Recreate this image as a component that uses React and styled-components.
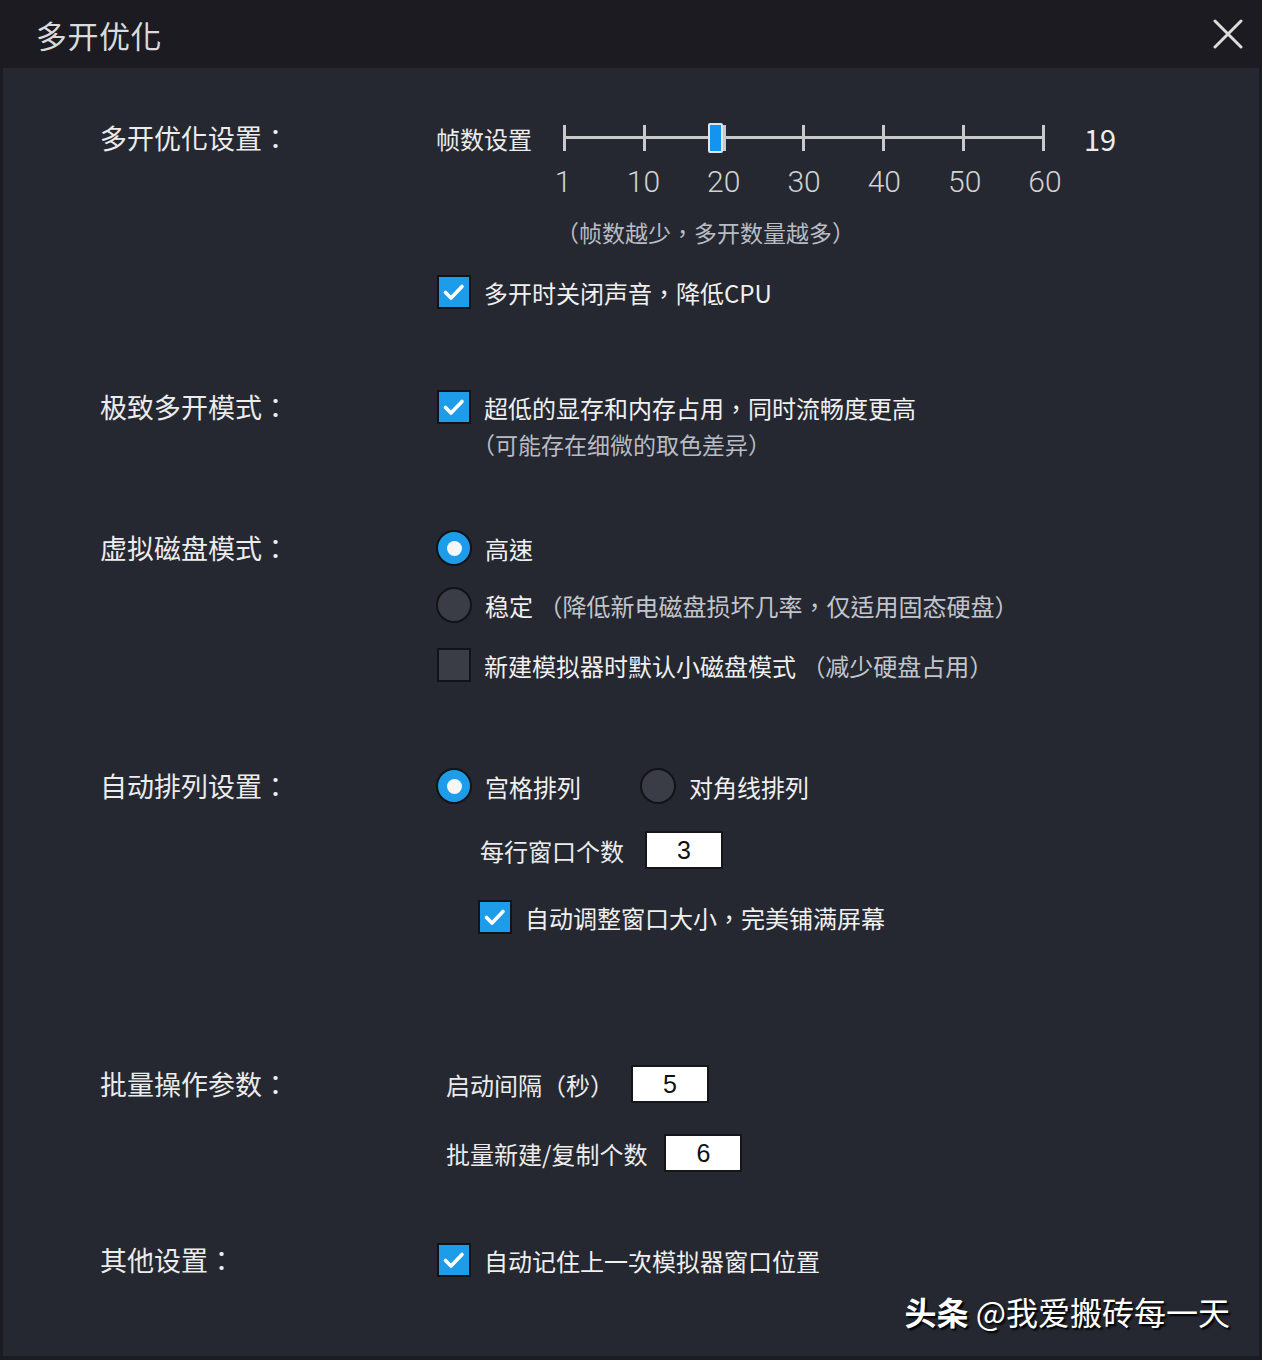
import styled, { createGlobalStyle } from "styled-components";

const FONT = `"Noto Sans CJK TC", "Noto Sans CJK SC", "Noto Sans", sans-serif`;

const GlobalStyle = createGlobalStyle`
  html, body {
    margin: 0;
    padding: 0;
    background: #252831;
  }
  body {
    font-family: ${FONT};
  }
`;

const TICKS = [1, 10, 20, 30, 40, 50, 60];
const FPS = 19;
const TRACK_W = 482;

const Check = () => (
  <svg width="34" height="34" viewBox="0 0 34 34">
    <path
      d="M8.5 17.5 L14 23 L25 11.5"
      fill="none"
      stroke="#fff"
      strokeWidth="3.6"
      strokeLinecap="round"
      strokeLinejoin="round"
    />
  </svg>
);

const CheckBox = ({ checked }) => (
  <Box $on={checked}>{checked && <Check />}</Box>
);

const Radio = ({ checked }) => (
  <RadioDot $on={checked}>{checked && <RadioInner />}</RadioDot>
);

const App = () => {
  const handleLeft = ((FPS - 1) / 59) * TRACK_W;

  return (
    <>
      <GlobalStyle />
      <Window>
        <TitleBar>
          <Title>多开优化</Title>
          <Close aria-label="close">
            <svg width="30" height="30" viewBox="0 0 30 30">
              <path
                d="M2 2 L28 28 M28 2 L2 28"
                stroke="#dcdcdc"
                strokeWidth="3"
                strokeLinecap="round"
              />
            </svg>
          </Close>
        </TitleBar>

        <Panel>
          <Section $gap={50}>
            <SectionLabel $h={40}>多开优化设置：</SectionLabel>
            <Column>
              <Row $h={40}>
                <SmallLabel>帧数设置</SmallLabel>
                <Track>
                  <TrackLine />
                  <Ticks>
                    {TICKS.map((t) => (
                      <Tick key={t} />
                    ))}
                  </Ticks>
                  <Handle style={{ left: handleLeft - 2 }} />
                </Track>
                <Value>{FPS}</Value>
              </Row>
              <Scale>
                {TICKS.map((t) => (
                  <ScaleNum key={t}>{t}</ScaleNum>
                ))}
              </Scale>
              <Hint $mt={18} $indent={120}>（帧数越少，多开数量越多）</Hint>
              <Row $mt={27}>
                <CheckBox checked />
                <Text>多开时关闭声音，降低CPU</Text>
              </Row>
            </Column>
          </Section>

          <Section $gap={79}>
            <SectionLabel>极致多开模式：</SectionLabel>
            <Column>
              <Row>
                <CheckBox checked />
                <Text>超低的显存和内存占用，同时流畅度更高</Text>
              </Row>
              <Hint $mt={4} $indent={36}>（可能存在细微的取色差异）</Hint>
            </Column>
          </Section>

          <Section $gap={71}>
            <SectionLabel>虚拟磁盘模式：</SectionLabel>
            <Column>
              <Row>
                <Radio checked />
                <Text>高速</Text>
              </Row>
              <Row $mt={21}>
                <Radio />
                <Text>
                  稳定 <Muted>（降低新电磁盘损坏几率，仅适用固态硬盘）</Muted>
                </Text>
              </Row>
              <Row $mt={24}>
                <CheckBox />
                <Text>
                  新建模拟器时默认小磁盘模式 <Muted>（减少硬盘占用）</Muted>
                </Text>
              </Row>
            </Column>
          </Section>

          <Section $gap={85}>
            <SectionLabel>自动排列设置：</SectionLabel>
            <Column>
              <Row>
                <Radio checked />
                <Text>宫格排列</Text>
                <Spacer />
                <Radio />
                <Text>对角线排列</Text>
              </Row>
              <Row $h={38} $mt={27} $indent={44}>
                <FieldLabel $gap={21}>每行窗口个数</FieldLabel>
                <NumberBox>3</NumberBox>
              </Row>
              <Row $mt={30} $indent={41}>
                <CheckBox checked />
                <Text>自动调整窗口大小，完美铺满屏幕</Text>
              </Row>
            </Column>
          </Section>

          <Section $gap={130}>
            <SectionLabel $h={38}>批量操作参数：</SectionLabel>
            <Column>
              <Row $h={38} $indent={10}>
                <FieldLabel>启动间隔（秒）</FieldLabel>
                <NumberBox>5</NumberBox>
              </Row>
              <Row $h={38} $mt={31} $indent={10}>
                <FieldLabel>批量新建/复制个数</FieldLabel>
                <NumberBox>6</NumberBox>
              </Row>
            </Column>
          </Section>

          <Section $gap={70}>
            <SectionLabel>其他设置：</SectionLabel>
            <Column>
              <Row>
                <CheckBox checked />
                <Text>自动记住上一次模拟器窗口位置</Text>
              </Row>
            </Column>
          </Section>

          <Watermark>
            <b>头条</b> @我爱搬砖每一天
          </Watermark>
        </Panel>
      </Window>
    </>
  );
};

export default App;

const Window = styled.div`
  width: 1262px;
  height: 1360px;
  display: flex;
  flex-direction: column;
  overflow: hidden;
`;

const TitleBar = styled.header`
  height: 68px;
  flex: none;
  background: #1b1b21;
  display: flex;
  align-items: center;
  justify-content: space-between;
  padding: 0 19px 0 36px;
`;

const Title = styled.h1`
  margin: 0;
  font-size: 31px;
  font-weight: 400;
  color: #dadada;
  letter-spacing: 0.5px;
`;

const Close = styled.div`
  width: 30px;
  height: 30px;
  display: flex;
`;

const Panel = styled.main`
  position: relative;
  flex: 1;
  background: #252831;
  border: 3px solid #1b1c22;
  border-top: none;
  border-bottom-width: 4px;
`;

const Section = styled.section`
  display: grid;
  grid-template-columns: 433px 1fr;
  margin-top: ${(p) => p.$gap}px;
`;

const SectionLabel = styled.div`
  padding-left: 97px;
  font-size: 27px;
  line-height: ${(p) => p.$h || 36}px;
  color: #ececec;
  white-space: nowrap;
`;

const Column = styled.div`
  display: flex;
  flex-direction: column;
  align-items: flex-start;
`;

const Row = styled.div`
  display: flex;
  align-items: center;
  height: ${(p) => p.$h || 36}px;
  margin-top: ${(p) => p.$mt || 0}px;
  padding-left: ${(p) => p.$indent || 0}px;
`;

const SmallLabel = styled.span`
  font-size: 24px;
  color: #ececec;
  white-space: nowrap;
`;

const Track = styled.div`
  position: relative;
  width: ${TRACK_W}px;
  height: 40px;
  margin-left: 31px;
`;

const TrackLine = styled.div`
  position: absolute;
  left: 0;
  right: 0;
  top: 18px;
  height: 3px;
  background: #c9c9c9;
`;

const Ticks = styled.div`
  position: absolute;
  inset: 7px 0;
  display: flex;
  justify-content: space-between;
`;

const Tick = styled.div`
  width: 3px;
  height: 100%;
  background: #c9c9c9;
`;

const Handle = styled.div`
  position: absolute;
  top: 5px;
  width: 15px;
  height: 30px;
  box-sizing: border-box;
  background: #1594ef;
  border: 2px solid #e4e4e4;
  border-radius: 2px;
`;

const Value = styled.span`
  margin-left: 39px;
  font-size: 29px;
  color: #ececec;
`;

const Scale = styled.div`
  display: flex;
  height: 34px;
  margin-top: 7px;
  margin-left: 87px;
`;

const ScaleNum = styled.span`
  width: 80.3px;
  text-align: center;
  font-family: Roboto, "Noto Sans", sans-serif;
  font-size: 30px;
  font-weight: 300;
  line-height: 34px;
  color: #d2d2d2;
`;

const Hint = styled.div`
  margin-top: ${(p) => p.$mt}px;
  padding-left: ${(p) => p.$indent}px;
  font-size: 23px;
  line-height: 30px;
  color: #b9bcc3;
  white-space: nowrap;
`;

const Box = styled.span`
  width: 34px;
  height: 34px;
  flex: none;
  box-sizing: border-box;
  margin-left: 1px;
  border: 2px solid #121317;
  background: ${(p) => (p.$on ? "#1c9ce9" : "#3a3d45")};
  display: flex;
  align-items: center;
  justify-content: center;
  svg {
    margin: -2px;
  }
`;

const RadioDot = styled.span`
  width: 36px;
  height: 36px;
  flex: none;
  box-sizing: border-box;
  border-radius: 50%;
  border: 2px solid #121317;
  background: ${(p) => (p.$on ? "#1c9ce9" : "#3a3d45")};
  display: flex;
  align-items: center;
  justify-content: center;
`;

const RadioInner = styled.span`
  width: 15px;
  height: 15px;
  border-radius: 50%;
  background: #f4f6f8;
`;

const Text = styled.span`
  margin-left: 13px;
  font-size: 24px;
  color: #f0f0f0;
  white-space: nowrap;
`;

const Muted = styled.span`
  color: #c2c5cc;
`;

const Spacer = styled.span`
  width: 59px;
`;

const FieldLabel = styled.span`
  margin-right: ${(p) => p.$gap || 17}px;
  font-size: 24px;
  color: #ececec;
  white-space: nowrap;
`;

const NumberBox = styled.div`
  width: 78px;
  height: 38px;
  box-sizing: border-box;
  background: #fff;
  border: 2px solid #15161a;
  color: #111;
  font-family: "Liberation Sans", sans-serif;
  font-size: 25px;
  display: flex;
  align-items: center;
  justify-content: center;
`;

const Watermark = styled.div`
  position: absolute;
  right: 29px;
  bottom: 22px;
  font-size: 32px;
  color: #fff;
  text-shadow: 2px 2px 2px #000;
  white-space: nowrap;
  b {
    font-weight: 700;
  }
`;
